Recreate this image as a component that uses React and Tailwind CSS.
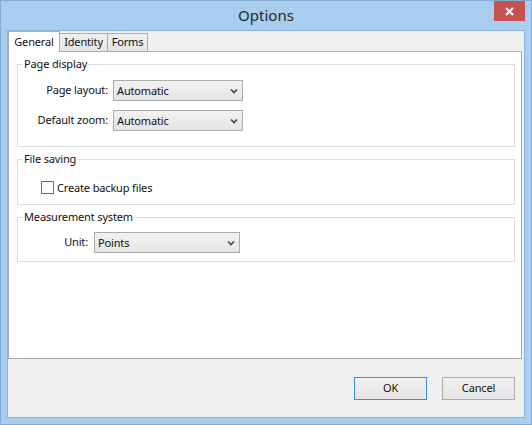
import React from "react";

const FONT = { fontFamily: '"Noto Sans", "Liberation Sans", Arial, sans-serif' };

function Chevron() {
  return (
    <svg width="8" height="6" viewBox="0 0 8 6" className="shrink-0">
      <path d="M1 1.5 L4 4.5 L7 1.5" fill="none" stroke="#444" strokeWidth="1.6" />
    </svg>
  );
}

function Select({ value, width }) {
  return (
    <div
      className={`flex h-[21px] items-center justify-between border border-[#acacac] bg-gradient-to-b from-[#f2f2f2] to-[#e5e5e5] pl-[3px] pr-[4px] ${width}`}
    >
      <span className="leading-none">{value}</span>
      <Chevron />
    </div>
  );
}

function Group({ title, height, children }) {
  return (
    <fieldset className={`ml-[8px] w-[498px] border border-[#dcdcdc] ${height}`}>
      <legend className="ml-[5px] px-[1px] leading-[16px]">{title}</legend>
      {children}
    </fieldset>
  );
}

function Button({ label, focused }) {
  return (
    <button
      className={`flex h-[23px] w-[73px] items-center justify-center bg-gradient-to-b from-[#f0f0f0] to-[#e5e5e5] ${
        focused ? "border border-[#3c8fe0]" : "border border-[#acacac]"
      }`}
    >
      {label}
    </button>
  );
}

export default function App() {
  return (
    <div
      className="flex h-[425px] w-[532px] flex-col border border-[#86abd2] bg-[#a7cdef] px-[6px] pb-[6px] text-[11px] tracking-[-0.15px] text-[#111]"
      style={FONT}
    >
      {/* Title bar */}
      <div className="relative flex h-[29px] items-center justify-center">
        <span className="text-[15px] tracking-normal text-[#2a2a2a]">Options</span>
        <div className="absolute right-[0px] top-0 flex h-[20px] w-[31px] items-center justify-center bg-[#c75050]">
          <svg width="9" height="9" viewBox="0 0 9 9">
            <path d="M1 1 L8 8 M8 1 L1 8" stroke="#fff" strokeWidth="2" />
          </svg>
        </div>
      </div>

      {/* Client */}
      <div className="flex flex-1 flex-col border border-[#8eb3d8] bg-[#f0f0f0]">
        {/* Tabs */}
        <div className="flex h-[20px] items-end">
          <div className="relative z-10 -mb-px flex h-[21px] w-[52px] items-start justify-center border border-b-0 border-[#acacac] bg-white pt-[2px]">
            General
          </div>
          <div className="-ml-px flex h-[18px] w-[49px] items-center justify-center border border-b-0 border-[#acacac] bg-gradient-to-b from-[#f0f0f0] to-[#e5e5e5]">
            Identity
          </div>
          <div className="-ml-px flex h-[18px] w-[41px] items-center justify-center border border-b-0 border-[#acacac] bg-gradient-to-b from-[#f0f0f0] to-[#e5e5e5]">
            Forms
          </div>
        </div>

        {/* Panel */}
        <div className="flex h-[308px] w-[514px] flex-col gap-[4px] border border-[#acacac] bg-white pt-[4px]">
          <Group title="Page display" height="h-[91px]">
            <div className="flex flex-col gap-[9px] pt-[8px]">
              <div className="flex items-center">
                <span className="w-[90px] text-right">Page layout:</span>
                <div className="ml-[5px]">
                  <Select value="Automatic" width="w-[130px]" />
                </div>
              </div>
              <div className="flex items-center">
                <span className="w-[90px] text-right">Default zoom:</span>
                <div className="ml-[5px]">
                  <Select value="Automatic" width="w-[130px]" />
                </div>
              </div>
            </div>
          </Group>

          <Group title="File saving" height="h-[54px]">
            <div className="ml-[23px] mt-[14px] flex items-center gap-[3px]">
              <div className="h-[13px] w-[13px] border border-[#707070] bg-white" />
              <span className="leading-[13px]">Create backup files</span>
            </div>
          </Group>

          <Group title="Measurement system" height="h-[53px]">
            <div className="mt-[7px] flex items-center">
              <span className="w-[70px] text-right">Unit:</span>
              <div className="ml-[6px]">
                <Select value="Points" width="w-[146px]" />
              </div>
            </div>
          </Group>
        </div>

        {/* Buttons */}
        <div className="flex justify-end gap-[15px] pr-[9px] pt-[18px]">
          <Button label="OK" focused />
          <Button label="Cancel" />
        </div>
      </div>
    </div>
  );
}
